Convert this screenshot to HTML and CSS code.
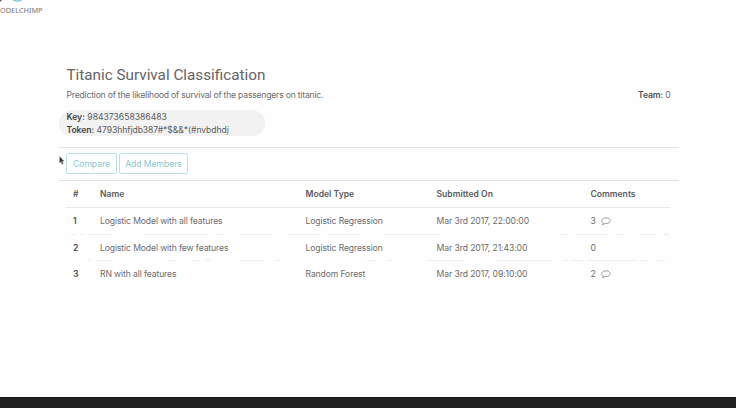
FILE: index.html
```html
<!DOCTYPE html>
<html lang="en">
<head>
<meta charset="utf-8">
<title>ModelChimp</title>
<link rel="stylesheet" href="styles.css">
</head>
<body>
<header class="brand">
  <svg class="brand-mark" width="30" height="5" viewBox="0 0 30 5"><path d="M0 0h2L0 2z" fill="#555"/><path d="M12 -1Q17.5 3.2 23 -1" fill="#d8f0f5" stroke="#79c5d4" stroke-width="1.3"/></svg>
  <span class="brand-name">ODELCHIMP</span>
</header>
<main class="project">
  <h1><span>Titanic Survival Classification</span></h1>
  <div class="summary"><p>Prediction of the likelihood of survival of the passengers on titanic.</p><p class="team"><b>Team:</b> 0</p></div>
  <div class="keys"><div class="key"><b>Key:</b> 984373658386483</div><div class="token"><b>Token:</b> 4793hhfjdb387#*$&amp;&amp;*(#nvbdhdj</div></div>
  <div class="toolbar">
    <button class="compare">Compare</button><button class="members">Add Members</button>
    <svg class="cursor" width="6" height="9" viewBox="0 0 6 9"><path d="M.6.5V7L2 5.6l1 2.7 1.2-.5-1-2.6h2z"/></svg>
  </div>
  <section class="table">
    <div class="row head"><span>#</span><span>Name</span><span>Model Type</span><span>Submitted On</span><span>Comments</span></div>
    <div class="row"><b>1</b><span>Logistic Model with all features</span><span>Logistic Regression</span><span class="date">Mar 3rd 2017, 22:00:00</span><span>3<svg class="bubble" width="10" height="9" viewBox="0 0 10 9"><path d="M5 .8C2.6.8.8 2 .8 3.7c0 1 .6 1.8 1.5 2.3-.1.8-.4 1.3-.9 1.7 1.1 0 1.9-.5 2.4-1.2L5 6.6c2.4 0 4.2-1.2 4.2-2.9S7.4.8 5 .8z"/></svg></span>
      <svg class="rule" width="604" height="1" viewBox="66 0 604 1"><path d="M68 .5h1m4 0h3m4 0h4m4 0h24m32 0h64m9 0h7m16 0h32m16 0h32m8 0h32m24 0h56m120 0h8m8 0h32m8 0h8m16 0h16m8 0h6"/></svg></div>
    <div class="row"><b>2</b><span>Logistic Model with few features</span><span>Logistic Regression</span><span class="date">Mar 3rd 2017, 21:43:00</span><span>0</span>
      <svg class="rule" width="604" height="1" viewBox="66 0 604 1"><path d="M88 .5h2m6 0h16m56 0h8m16 0h8m6 0h4m30 0h24m12 0h4m87 0h9m12 0h4m36 0h36m33 0h55m11 0h5m4 0h12m4 0h48m4 0h8m8 0h7m5 0h1"/></svg></div>
    <div class="row"><b>3</b><span>RN with all features</span><span>Random Forest</span><span class="date">Mar 3rd 2017, 09:10:00</span><span>2<svg class="bubble" width="10" height="9" viewBox="0 0 10 9"><path d="M5 .8C2.6.8.8 2 .8 3.7c0 1 .6 1.8 1.5 2.3-.1.8-.4 1.3-.9 1.7 1.1 0 1.9-.5 2.4-1.2L5 6.6c2.4 0 4.2-1.2 4.2-2.9S7.4.8 5 .8z"/></svg></span></div>
  </section>
</main>
<footer class="footer"></footer>
</body>
</html>
```
FILE: styles.css
```css
* { box-sizing: border-box; }
body { margin: 0; width: 736px; height: 408px; overflow: hidden; display: flex; flex-direction: column; background: #fefefe; color: #6c6c6c; font: 8.6px/13px Inter, sans-serif; }
p, h1 { margin: 0; font-weight: 400; }
b { font-weight: 600; color: #505050; }
.brand { height: 66px; }
.brand-mark { display: block; }
.brand-name { display: block; font: 7.3px/11px "Noto Sans", sans-serif; letter-spacing: .03px; color: #777; }
.project { flex: 1; width: 620px; margin-left: 59px; }
h1 { height: 20px; padding-left: 7.5px; font: 15.25px/19px Roboto, sans-serif; color: #646464; }
.summary { display: flex; justify-content: space-between; height: 24px; padding: 3px 8.5px 0 7.5px; letter-spacing: -.2px; }
.team { letter-spacing: -.15px; }
.keys { width: 206px; height: 26px; padding: 1px 7.5px; border-radius: 13px; background: #f2f2f2; color: #5c5c5c; }
.keys b { color: #444; }
.token { letter-spacing: -.06px; }
.toolbar { position: relative; display: flex; gap: 2px; height: 33px; margin-top: 11px; padding: 5px 7px; border-top: 1px solid #e6e6e6; }
.toolbar button { height: 21px; padding: 1px 0 0; border: 1px solid #b9e2e6; border-radius: 2px; background: #fff; color: #88c8d0; font: 8.6px/18px Inter, sans-serif; letter-spacing: -.05px; white-space: nowrap; }
.compare { width: 51px; }
.members { width: 69px; }
.cursor { position: absolute; left: 0; top: 8px; fill: #333; stroke: #999; stroke-width: .5; }
.table { border-top: 1px solid #e0e2e2; }
.row { position: relative; display: grid; grid-template-columns: 27px 205.5px 131px 154px auto; align-items: center; height: 26.7px; margin: 0 9px 0 7px; padding-left: 7px; white-space: nowrap; letter-spacing: -.11px; }
.row .date { letter-spacing: -.08px; }
.head { height: 27px; border-bottom: 1px solid #e6e9e9; color: #5c5c5c; font-weight: 600; letter-spacing: 0; }
.rule { position: absolute; left: 0; bottom: 0; stroke: #eee; }
.bubble { margin-left: 5px; vertical-align: -2px; fill: none; stroke: #888; stroke-width: .8; }
.footer { height: 11px; background: #212121; border-top: 1px solid #171717; }
```
